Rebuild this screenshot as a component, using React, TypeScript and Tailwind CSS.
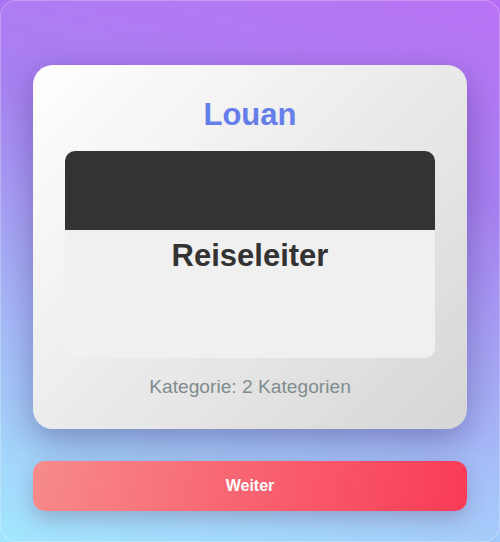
import React from "react";

const App = () => {
  return (
    <main className="w-[500px] h-[542px] bg-[linear-gradient(195deg,#b66cf4,#a47af1_30%,#a2b4f7_65%,#9ee6fd)] font-['Liberation_Sans',Arial,sans-serif]">
      <div className="w-full h-full rounded-2xl border border-white/25 bg-white/5 flex flex-col pt-[64px] px-[32px]">
        <CandidateCard />
        <button className="mt-[32px] h-[50px] w-full rounded-xl bg-[linear-gradient(100deg,#f78b8b,#f93b57)] text-white text-base font-bold shadow-[0_8px_20px_rgba(90,40,80,0.25)]">
          Weiter
        </button>
      </div>
    </main>
  );
};

export default App;

const CandidateCard = () => {
  return (
    <section className="rounded-[20px] bg-[linear-gradient(135deg,#ffffff,#d6d6d6)] px-[32px] pt-[32px] pb-[31px] flex flex-col items-center shadow-[0_12px_35px_rgba(40,20,90,0.35)]">
      <h1 className="text-[31px] leading-[36px] font-bold text-[#667eea] mb-[18px]">Louan</h1>
      <div className="w-full h-[207px] rounded-[10px] overflow-hidden bg-[#f0f0f0] flex flex-col">
        <div className="h-[79px] bg-[#333333]" />
        <h2 className="mt-[8px] text-center text-[31px] leading-[36px] font-bold text-[#333333]">
          Reiseleiter
        </h2>
      </div>
      <p className="mt-[18px] text-[19.2px] leading-[22px] text-[#7f8c8d]">Kategorie: 2 Kategorien</p>
    </section>
  );
};
